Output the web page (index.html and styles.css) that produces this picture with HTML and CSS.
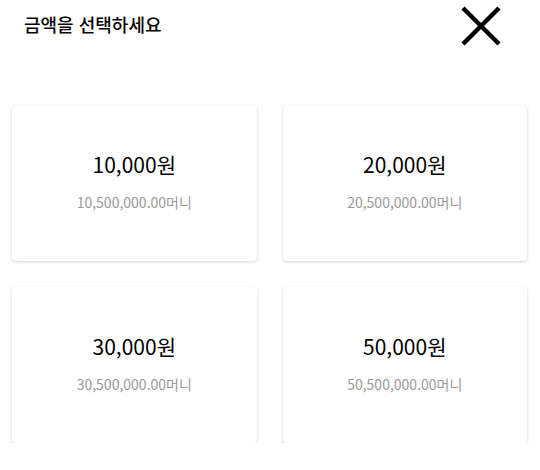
FILE: index.html
```html
<!DOCTYPE html>
<html lang="ko">
<head>
    <meta charset="UTF-8">
    <meta name="viewport" content="width=device-width, initial-scale=1.0">
    <title>금액 선택</title>
    <link rel="stylesheet" href="styles.css">
</head>
<body>
    <div class="sheet">
        <div class="sheet-header">
            <h1 class="sheet-title">금액을 선택하세요</h1>
            <button class="close-btn" aria-label="닫기">
                <svg width="40" height="40" viewBox="0 0 40 40">
                    <path d="M2 2 L38 38 M38 2 L2 38" stroke="#000" stroke-width="4.5" fill="none"/>
                </svg>
            </button>
        </div>

        <div class="amount-grid">
            <button class="amount-card">
                <span class="amount">10,000원</span>
                <span class="money">10,500,000.00머니</span>
            </button>
            <button class="amount-card">
                <span class="amount">20,000원</span>
                <span class="money">20,500,000.00머니</span>
            </button>
            <button class="amount-card">
                <span class="amount">30,000원</span>
                <span class="money">30,500,000.00머니</span>
            </button>
            <button class="amount-card">
                <span class="amount">50,000원</span>
                <span class="money">50,500,000.00머니</span>
            </button>
        </div>
    </div>
</body>
</html>
```

FILE: styles.css
```css
body {
    margin: 0;
    background-color: #fff;
    font-family: "Noto Sans CJK KR", "Noto Sans", sans-serif;
    color: #000;
}

.sheet {
    padding: 0 13px 0 12px;
}

.sheet-header {
    display: flex;
    justify-content: space-between;
    align-items: center;
    height: 50px;
    padding: 0 26px 0 12px;
}

.sheet-title {
    margin: 0 0 2px;
    font-size: 18px;
    font-weight: 500;
}

.close-btn {
    background: none;
    border: none;
    padding: 0;
    width: 40px;
    height: 40px;
    margin-top: 2px;
    cursor: pointer;
}

.close-btn svg {
    display: block;
}

.amount-grid {
    display: grid;
    grid-template-columns: 1fr 1fr;
    column-gap: 26px;
    row-gap: 26px;
    margin-top: 55px;
}

.amount-card {
    display: flex;
    flex-direction: column;
    align-items: center;
    justify-content: center;
    gap: 13px;
    height: 156px;
    padding: 0 0 5px;
    background-color: #fff;
    border: none;
    border-radius: 4px;
    box-shadow: 0 1px 3px rgba(0,0,0,0.18);
    font-family: inherit;
    cursor: pointer;
}

.amount {
    font-size: 21px;
    font-weight: 400;
    color: #000;
}

.money {
    font-size: 14px;
    color: #999;
}
```
